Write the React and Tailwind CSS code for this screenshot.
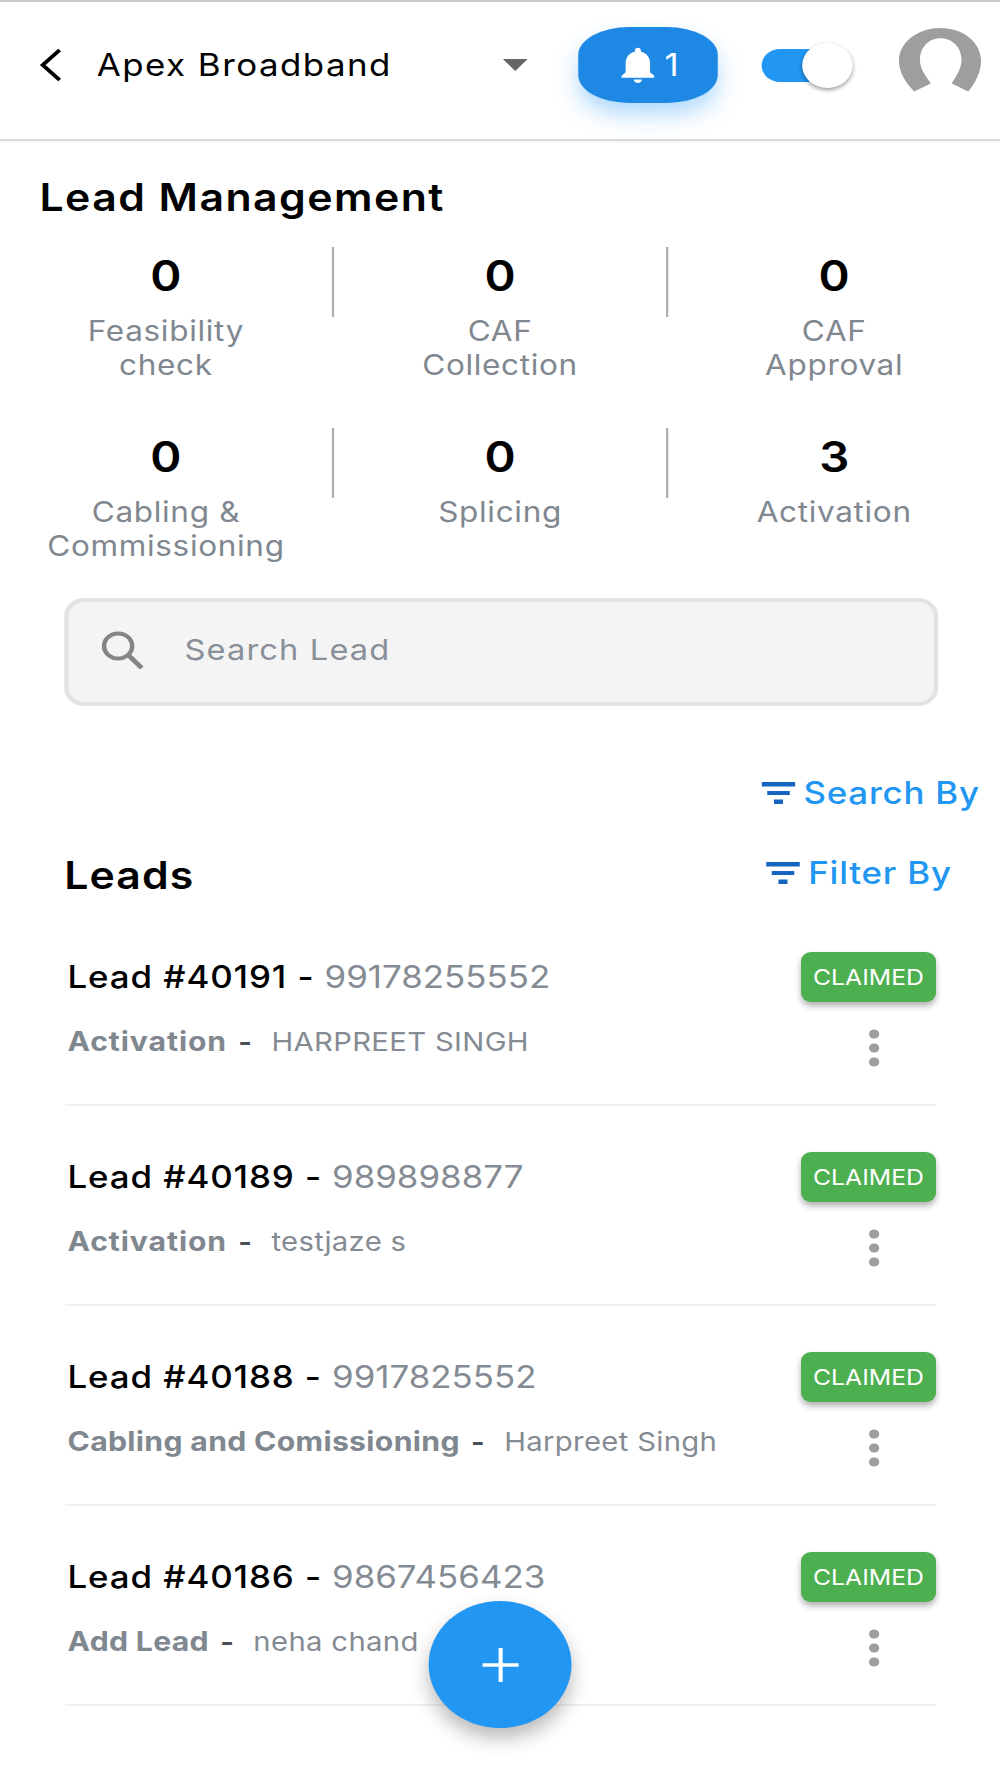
import React from "react";

const FONT = "font-['Inter','Noto_Sans',sans-serif]";

function FilterIcon() {
  return (
    <svg width="30" height="22" viewBox="0 0 30 22" className="shrink-0">
      <rect x="0" y="0" width="30" height="4.5" fill="#1565c0" />
      <rect x="5" y="9" width="20" height="4" fill="#1565c0" />
      <rect x="11" y="17.5" width="8" height="4.5" fill="#1565c0" />
    </svg>
  );
}

function Kebab() {
  return (
    <svg width="10" height="40" viewBox="0 0 10 40" className="mt-[26px] mr-[50px]">
      <circle cx="5" cy="6" r="4.6" fill="#9e9e9e" />
      <circle cx="5" cy="20" r="4.6" fill="#9e9e9e" />
      <circle cx="5" cy="34" r="4.6" fill="#9e9e9e" />
    </svg>
  );
}

function Stat({ value, label, divider }) {
  return (
    <div className="flex items-start">
      <div className="flex-1 text-center">
        <div className="h-[58px] text-[42px] leading-[58px] font-semibold text-black">{value}</div>
        <div className="mt-[9px] text-[28px] leading-[34px] tracking-[0.6px] text-[#80878f]">{label}</div>
      </div>
      {divider && <div className="h-[70px] w-[2px] bg-[#aeaeae]" />}
    </div>
  );
}

function Lead({ id, phone, stage, name, wide }) {
  return (
    <div className="flex h-[200px] justify-between border-b-2 border-[#f0f0f0] pt-[46px]">
      <div className="pl-[2px]">
        <div className="flex h-[50px] items-center text-[31px]">
          <span className="font-medium tracking-[0.8px] text-black">Lead #{id} -</span>
          <span className="ml-[9px] text-[#858b93]">{phone}</span>
        </div>
        <div className="mt-[14px] flex h-[50px] items-center text-[26px] tracking-[0.3px]">
          <span className={`text-[26.8px] font-bold text-[#80878f] ${wide ? "tracking-[0.8px]" : "tracking-[0.3px]"}`}>{stage}</span>
          <span className="ml-[10px] font-bold text-[#4b4f54]">-</span>
          <span className="ml-[17px] text-[#858b93]">{name}</span>
        </div>
      </div>
      <div className="flex flex-col items-end">
        <div className="flex h-[50px] w-[120px] items-center justify-center rounded-[9px] bg-[#4caf50] text-[22px] text-white shadow-[0_4px_6px_rgba(0,0,0,0.3)]">
          CLAIMED
        </div>
        <Kebab />
      </div>
    </div>
  );
}

export default function App() {
  return (
    <div className="h-[1778px] w-[1000px] overflow-hidden bg-white">
      <div className={`${FONT} relative h-[1778px] w-[889px] origin-top-left scale-x-[1.125] bg-white`}>
        <header className="flex h-[141px] items-center border-t-2 border-b-2 border-t-[#c8c8c8] border-b-[#d9d9d9] pb-[11px] pl-[35px] shadow-[0_1px_2px_rgba(0,0,0,0.08)]">
          <svg width="20" height="34" viewBox="0 0 20 34" className="shrink-0">
            <path d="M18 2 L3 17 L18 32" fill="none" stroke="#000" strokeWidth="3.6" />
          </svg>
          <div className="ml-[31px] w-[361px] text-[31px] leading-[40px] tracking-[1.3px] text-black">Apex Broadband</div>
          <svg width="22" height="12" viewBox="0 0 22 12" className="shrink-0">
            <path d="M0 0 H22 L11 12 Z" fill="#666" />
          </svg>
          <div className="ml-[45px] flex h-[76px] w-[124px] items-center justify-center gap-[6px] rounded-[45px/28px] bg-[#1e88e5] text-[31px] text-white shadow-[0_12px_20px_rgba(33,150,243,0.35)]">
            <svg width="36" height="38" viewBox="3 1.5 18 21" className="shrink-0">
              <path fill="#fff" d="M12 22c1.1 0 2-.9 2-2h-4c0 1.1.9 2 2 2zm6-6v-5c0-3.07-1.63-5.64-4.5-6.32V4c0-.83-.67-1.5-1.5-1.5s-1.5.67-1.5 1.5v.68C7.64 5.36 6 7.92 6 11v5l-2 2v1h16v-1l-2-2z" />
            </svg>
            <span>1</span>
          </div>
          <div className="relative ml-[39px] h-[33px] w-[81px]">
            <div className="h-[33px] w-[60px] rounded-full bg-[#2196f3]" />
            <div className="absolute top-[-6px] right-0 h-[45px] w-[45px] rounded-full bg-white shadow-[0_2px_4px_rgba(0,0,0,0.4)]" />
          </div>
          <svg width="73" height="64" viewBox="0 0 73 64" className="mb-[10px] ml-[41px] shrink-0">
            <path fill="#9e9e9e" d="M37 0 C57 0 73 14 73 33 C73 44 68 55 61.6 63.5 L47 55.5 C49 51 55.7 42 55.7 32 C55.7 20 48 10.3 37 10.3 C26 10.3 18.7 20 18.7 32 C18.7 42 26 51 28.4 55.5 L13.6 63.5 C6 55 0 44 0 33 C0 14 17 0 37 0 Z" />
          </svg>
        </header>

        <h1 className="mt-[34px] pl-[35px] text-[38px] leading-[44px] font-semibold tracking-[1.3px] text-black">Lead Management</h1>

        <div className="mt-[28px] grid h-[181px] grid-cols-[297px_297px_1fr]">
          <Stat value="0" label={<>Feasibility<br />check</>} divider />
          <Stat value="0" label={<>CAF<br />Collection</>} divider />
          <Stat value="0" label={<>CAF<br />Approval</>} />
        </div>
        <div className="grid h-[170px] grid-cols-[297px_297px_1fr]">
          <Stat value="0" label={<>Cabling &amp;<br />Commissioning</>} divider />
          <Stat value="0" label="Splicing" divider />
          <Stat value="3" label="Activation" />
        </div>

        <div className="ml-[57px] flex h-[108px] w-[777px] items-center rounded-[18px] border-4 border-[#e2e2e2] bg-[#f4f4f4] pl-[29px]">
          <svg width="38" height="38" viewBox="0 0 38 38" className="mb-[4px] shrink-0">
            <circle cx="15" cy="15" r="12.5" fill="none" stroke="#858585" strokeWidth="4" />
            <path d="M24 24 L36 37" stroke="#858585" strokeWidth="4.5" />
          </svg>
          <span className="mb-[4px] ml-[36px] text-[29px] tracking-[1px] text-[#8a9098]">Search Lead</span>
        </div>

        <div className="mt-[67px] flex h-[40px] items-center justify-end gap-[7px] pr-[18px] text-[31px] font-medium tracking-[0.7px] text-[#2196f3]">
          <FilterIcon />
          <span>Search By</span>
        </div>

        <div className="mt-[40px] flex h-[44px] items-center justify-between pr-[43px] pl-[57px]">
          <h2 className="text-[38px] leading-[44px] font-semibold tracking-[1px] text-black">Leads</h2>
          <div className="mb-[4px] flex items-center gap-[7px] text-[31px] font-medium tracking-[0.7px] text-[#2196f3]">
            <FilterIcon />
            <span>Filter By</span>
          </div>
        </div>

        <div className="mt-[9px] mr-[57px] ml-[58px]">
          <Lead id="40191" phone="99178255552" stage="Activation" name="HARPREET SINGH" wide />
          <Lead id="40189" phone="989898877" stage="Activation" name="testjaze s" wide />
          <Lead id="40188" phone="9917825552" stage="Cabling and Comissioning" name="Harpreet Singh" />
          <Lead id="40186" phone="9867456423" stage="Add Lead" name="neha chand" />
        </div>

        <div className="absolute top-[1601px] left-[381px] flex h-[127px] w-[127px] items-center justify-center rounded-full bg-[#2196f3] shadow-[0_10px_18px_rgba(0,0,0,0.28)]">
          <svg width="34" height="34" viewBox="0 0 34 34">
            <path d="M17 0 V34 M1 17 H33" stroke="#fff" strokeWidth="3.6" />
          </svg>
        </div>
      </div>
    </div>
  );
}
